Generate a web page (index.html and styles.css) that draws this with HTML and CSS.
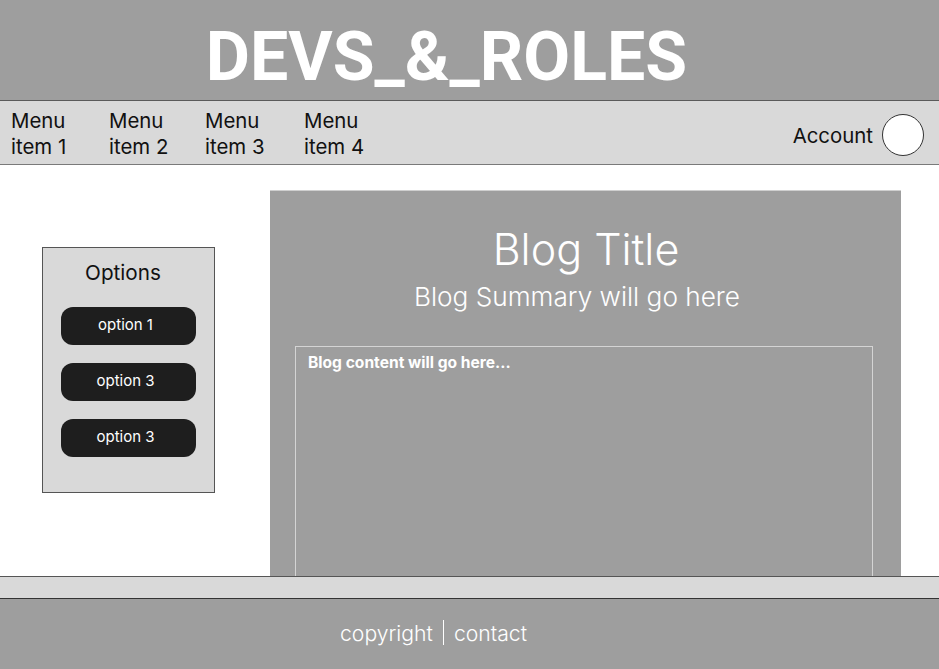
FILE: index.html
```html
<!DOCTYPE html>
<html lang="en">
<head>
<meta charset="utf-8">
<title>DEVS_&amp;_ROLES</title>
<link rel="stylesheet" href="styles.css">
</head>
<body>
<div class="page">
  <header class="header">
    <h1 class="brand">DEVS_&amp;_ROLES</h1>
  </header>
  <nav class="nav">
    <ul class="menu">
      <li class="menu-item">Menu<br>item 1</li>
      <li class="menu-item">Menu<br>item 2</li>
      <li class="menu-item">Menu<br>item 3</li>
      <li class="menu-item">Menu<br>item 4</li>
    </ul>
    <div class="account">
      <span class="account-label">Account</span>
      <span class="avatar"></span>
    </div>
  </nav>
  <main class="main">
    <aside class="sidebar">
      <div class="sidebar-title">Options</div>
      <button class="opt">option 1</button>
      <button class="opt">option 3</button>
      <button class="opt">option 3</button>
    </aside>
    <article class="blog">
      <h2 class="blog-title">Blog Title</h2>
      <p class="blog-summary">Blog Summary will go here</p>
      <div class="blog-content">Blog content will go here...</div>
    </article>
  </main>
  <div class="band"></div>
  <footer class="footer">
    <span class="foot-link">copyright</span>
    <span class="foot-sep"></span>
    <span class="foot-link">contact</span>
  </footer>
</div>
</body>
</html>
```
FILE: styles.css
```css
* { box-sizing: border-box; }
html, body { margin: 0; padding: 0; }
body {
  width: 939px;
  height: 669px;
  overflow: hidden;
  background: #ffffff;
  font-family: Inter, "Noto Sans", sans-serif;
}
.page { display: flex; flex-direction: column; height: 669px; }

.header {
  height: 100px;
  flex: 0 0 100px;
  background: #9e9e9e;
  display: flex;
  justify-content: center;
  padding: 24px 46px 0 0;
}
.brand {
  margin: 0;
  font-family: Roboto, "Liberation Sans", sans-serif;
  font-weight: 700;
  font-size: 68px;
  line-height: 67px;
  color: #ffffff;
}

.nav {
  height: 65px;
  flex: 0 0 65px;
  background: #d9d9d9;
  border-top: 1px solid #5a5a5a;
  border-bottom: 1px solid #7a7a7a;
  display: flex;
  justify-content: space-between;
  align-items: flex-start;
  padding: 7px 15px 0 11px;
}
.menu {
  list-style: none;
  margin: 0;
  padding: 0;
  display: grid;
  grid-template-columns: 98px 96px 99px auto;
}
.menu-item {
  font-size: 20.4px;
  line-height: 26px;
  color: #111111;
}
.account {
  display: flex;
  align-items: center;
  gap: 9px;
  height: 56px;
  margin-top: -1px;
}
.account-label {
  font-size: 20.4px;
  color: #111111;
}
.avatar {
  width: 42px;
  height: 42px;
  border-radius: 50%;
  background: #ffffff;
  border: 1px solid #333333;
}

.main {
  height: 411px;
  flex: 0 0 411px;
  overflow: hidden;
  display: flex;
  align-items: flex-start;
  padding-left: 42px;
  gap: 55px;
  background: #ffffff;
}
.sidebar {
  margin-top: 82px;
  width: 173px;
  height: 246px;
  background: #d9d9d9;
  border: 1px solid #555555;
  display: flex;
  flex-direction: column;
  align-items: flex-start;
  padding: 13px 0 0 18px;
}
.sidebar-title {
  width: 124px;
  text-align: center;
  font-size: 20.7px;
  line-height: 24px;
  color: #111111;
  margin-bottom: 22px;
}
.opt {
  width: 135px;
  height: 38px;
  border: none;
  border-radius: 12px;
  background: #1e1e1e;
  color: #ffffff;
  font-family: Inter, "Noto Sans", sans-serif;
  font-size: 15px;
  line-height: 36px;
  padding: 0 6px 2px 0;
  margin-bottom: 18px;
}

.blog {
  margin-top: 25px;
  flex: 0 0 631px;
  height: 400px;
  background: #9e9e9e;
  border-top: 1px solid #cfcfcf;
  padding: 33px 28px 0 25px;
  display: flex;
  flex-direction: column;
  align-items: stretch;
  font-family: Inter, "Noto Sans", sans-serif;
  color: #ffffff;
}
.blog-title {
  margin: 0;
  text-align: center;
  font-weight: 300;
  font-size: 43px;
  line-height: 50px;
  padding-left: 4px;
}
.blog-summary {
  margin: 8px 0 0;
  text-align: center;
  font-weight: 300;
  font-size: 26.2px;
  line-height: 29px;
  padding-right: 14px;
}
.blog-content {
  margin-top: 35px;
  flex: 1;
  border: 1px solid #d4d4d4;
  padding: 7px 12px;
  font-weight: 700;
  font-size: 15.6px;
  line-height: 18px;
}

.band {
  height: 23px;
  flex: 0 0 23px;
  background: #d9d9d9;
  border-top: 1px solid #555555;
  border-bottom: 1px solid #333333;
}
.footer {
  flex: 1;
  background: #9e9e9e;
  display: flex;
  align-items: center;
  padding: 0 0 3px 340px;
  gap: 10px;
  font-family: Inter, "Noto Sans", sans-serif;
  font-weight: 300;
  font-size: 21.2px;
  color: #ffffff;
}
.foot-sep {
  width: 1px;
  height: 25px;
  background: #ffffff;
}
```
